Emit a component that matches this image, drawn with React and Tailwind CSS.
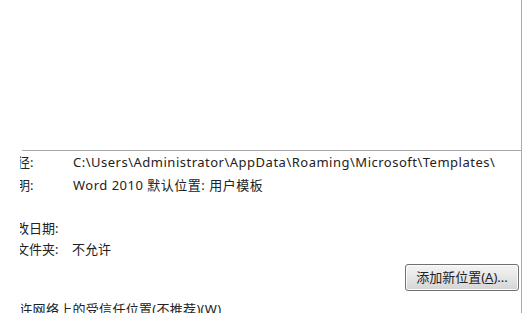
import React from "react";

const font = { fontFamily: '"Noto Sans", "Noto Sans CJK SC", sans-serif' };

const rows = [
  { label: "路径:", value: "C:\\Users\\Administrator\\AppData\\Roaming\\Microsoft\\Templates\\" },
  { label: "说明:", value: "Word 2010 默认位置: 用户模板" },
];

// labels start left of the visible area; only their tail shows
const Label = ({ children, width = "w-[53px]", shift = "-ml-[16px]" }) => (
  <div className={`ml-[20px] ${width} shrink-0 overflow-hidden whitespace-nowrap`}>
    <span className={`${shift} inline-block`}>{children}</span>
  </div>
);

export default function App() {
  return (
    <div
      className="relative h-[313px] w-[524px] overflow-hidden bg-white text-[13px] leading-[23px] text-[#222]"
      style={font}
    >
      <div className="flex h-[313px] w-[522px] flex-col border-r border-[#a9a9a9]">
        <div className="h-[150px] shrink-0" />
        <div className="ml-[22px] border-t border-[#a8a8a8]" />

        <div className="flex flex-col">
          {rows.map((r) => (
            <div key={r.label} className="flex h-[23px] items-center">
              <Label>{r.label}</Label>
              <span className="whitespace-nowrap tracking-[0.5px]">{r.value}</span>
            </div>
          ))}
        </div>

        <div className="mt-[21px] flex flex-col">
          <div className="flex h-[21px] items-center">
            <Label shift="-ml-[17px]">修改日期:</Label>
          </div>
          <div className="flex h-[21px] items-center">
            <Label width="w-[52px]" shift="-ml-[17px]">子文件夹:</Label>
            <span>不允许</span>
          </div>
        </div>

        <div className="mt-[4px] flex justify-end pr-[2px]">
          <button className="flex h-[27px] w-[114px] items-center justify-center rounded-[3px] border border-[#707070] bg-gradient-to-b from-[#f4f4f4] via-[#e6e6e6] to-[#d4d4d4] text-[13px] text-[#222] shadow-[inset_0_0_0_1px_#fbfbfb]">
            添加新位置(<span className="underline">A</span>)...
          </button>
        </div>

        <div className="mt-[7px] flex items-end">
          <div className="ml-[21px] overflow-hidden whitespace-nowrap">
            <span className="-ml-[15px] inline-block tracking-[0.3px]">
              允许网络上的受信任位置(不推荐)(<span className="underline">W</span>)
            </span>
          </div>
          <div className="mb-[3px] ml-[3px] flex-1 border-b border-[#a8a8a8]" />
        </div>
      </div>
    </div>
  );
}
